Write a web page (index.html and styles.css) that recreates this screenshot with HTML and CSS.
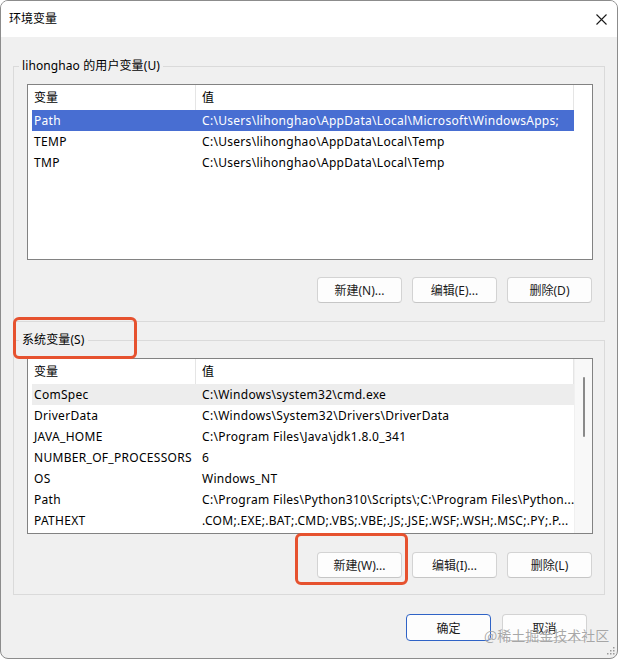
FILE: index.html
```html
<!DOCTYPE html>
<html lang="zh-CN">
<head>
<meta charset="utf-8">
<title>环境变量</title>
<link rel="stylesheet" href="styles.css">
</head>
<body>
<div class="window">
  <div class="titlebar">
    <span class="title">环境变量</span>
    <svg class="close" width="11" height="11" viewBox="0 0 11 11"><path d="M0.5 0.5L10.5 10.5M10.5 0.5L0.5 10.5" stroke="#1a1a1a" stroke-width="1.1" fill="none"/></svg>
  </div>
  <div class="content">
    <fieldset class="group group-user">
      <legend>lihonghao 的用户变量(U)</legend>
      <div class="list">
        <div class="table">
          <div class="row head"><span class="c1">变量</span><span class="c2">值</span></div>
          <div class="row selected"><span class="c1">Path</span><span class="c2">C:\Users\lihonghao\AppData\Local\Microsoft\WindowsApps;</span></div>
          <div class="row"><span class="c1">TEMP</span><span class="c2">C:\Users\lihonghao\AppData\Local\Temp</span></div>
          <div class="row"><span class="c1">TMP</span><span class="c2">C:\Users\lihonghao\AppData\Local\Temp</span></div>
        </div>
        <div class="gutter"></div>
      </div>
      <div class="buttons">
        <button class="btn">新建(N)...</button>
        <button class="btn">编辑(E)...</button>
        <button class="btn">删除(D)</button>
      </div>
    </fieldset>
    <fieldset class="group group-sys">
      <legend>系统变量(S)</legend>
      <div class="list">
        <div class="table">
          <div class="row head"><span class="c1">变量</span><span class="c2">值</span></div>
          <div class="row hover"><span class="c1">ComSpec</span><span class="c2">C:\Windows\system32\cmd.exe</span></div>
          <div class="row"><span class="c1">DriverData</span><span class="c2">C:\Windows\System32\Drivers\DriverData</span></div>
          <div class="row"><span class="c1">JAVA_HOME</span><span class="c2">C:\Program Files\Java\jdk1.8.0_341</span></div>
          <div class="row"><span class="c1">NUMBER_OF_PROCESSORS</span><span class="c2">6</span></div>
          <div class="row"><span class="c1">OS</span><span class="c2">Windows_NT</span></div>
          <div class="row"><span class="c1">Path</span><span class="c2">C:\Program Files\Python310\Scripts\;C:\Program Files\Python...</span></div>
          <div class="row"><span class="c1">PATHEXT</span><span class="c2">.COM;.EXE;.BAT;.CMD;.VBS;.VBE;.JS;.JSE;.WSF;.WSH;.MSC;.PY;.P...</span></div>
        </div>
        <div class="gutter scroll"><div class="thumb"></div></div>
      </div>
      <div class="buttons">
        <button class="btn">新建(W)...</button>
        <button class="btn">编辑(I)...</button>
        <button class="btn">删除(L)</button>
      </div>
    </fieldset>
    <div class="footer">
      <button class="btn primary">确定</button>
      <button class="btn">取消</button>
    </div>
  </div>
  <div class="mark mark-label"></div>
  <div class="mark mark-new"></div>
  <div class="watermark">@稀土掘金技术社区</div>
  <svg class="grip" width="9" height="9" viewBox="0 0 9 9">
    <rect x="7" y="1" width="1.5" height="1.5" fill="#9a9a9a"/>
    <rect x="4" y="4" width="1.5" height="1.5" fill="#9a9a9a"/>
    <rect x="7" y="4" width="1.5" height="1.5" fill="#9a9a9a"/>
    <rect x="1" y="7" width="1.5" height="1.5" fill="#9a9a9a"/>
    <rect x="4" y="7" width="1.5" height="1.5" fill="#9a9a9a"/>
    <rect x="7" y="7" width="1.5" height="1.5" fill="#9a9a9a"/>
  </svg>
</div>
</body>
</html>
```
FILE: styles.css
```css
* { box-sizing: border-box; }
html, body { margin: 0; padding: 0; background: #ffffff; }
body {
  font-family: "Noto Sans", "Noto Sans CJK SC", sans-serif;
  font-size: 12px;
  color: #000;
}
.window {
  position: relative;
  width: 618px;
  height: 659px;
  border: 1px solid #8c8c8c;
  border-radius: 8px;
  background: #f0f0f0;
  overflow: hidden;
  display: flex;
  flex-direction: column;
}
.titlebar {
  height: 36px;
  flex: none;
  background: #ffffff;
  display: flex;
  align-items: center;
  justify-content: space-between;
  padding: 0 10px 0 8px;
}
.title { font-size: 12px; line-height: 16px; }
.content { padding: 0 12px; display: flex; flex-direction: column; }
.group {
  margin: 0;
  padding: 0 0 17px 0;
  border: 1px solid #dadada;
  min-width: 0;
}
.group-user { margin-top: 21px; padding-bottom: 18px; }
.group-sys { margin-top: 10px; padding-bottom: 16px; }
.group legend {
  margin-left: 5px;
  padding: 0 3px;
  line-height: 16px;
  font-size: 12px;
  letter-spacing: 0.1px;
}
.list {
  margin: 10px 11px 0 13px;
  height: 176px;
  border: 1px solid #828282;
  background: #ffffff;
  padding-left: 4px;
  display: flex;
}
.table { flex: 1; min-width: 0; }
.gutter { width: 18px; flex: none; }
.gutter.scroll { background: #f8f8f8; border-left: 1px solid #f0f0f0; }
.thumb {
  width: 2px;
  height: 60px;
  margin: 18px 0 0 8px;
  background: #8a8a8a;
  border-radius: 1px;
}
.row {
  display: grid;
  grid-template-columns: 164px 1fr;
  height: 21px;
  align-items: center;
  line-height: 21px;
  white-space: nowrap;
  letter-spacing: 0.3px;
}
.row .c1 { padding-left: 2px; overflow: hidden; }
.row .c2 { padding-left: 6px; overflow: hidden; }
.row.head { height: 25px; line-height: 25px; letter-spacing: 0; }
.row.head .c1 { border-right: 1px solid #e5e5e5; height: 25px; }
.row.head .c2 { border-right: 1px solid #e5e5e5; height: 25px; }
.row.selected { background: #486ed2; color: #ffffff; }
.row.hover { background: #ededed; }
.buttons {
  display: flex;
  justify-content: flex-end;
  gap: 10px;
  margin: 17px 12px 0 0;
}
.group-sys .buttons { margin-top: 18px; }
.btn {
  width: 85px;
  height: 26px;
  font-family: "Noto Sans", "Noto Sans CJK SC", sans-serif;
  font-size: 12px;
  color: #1a1a1a;
  background: #fdfdfd;
  border: 1px solid #d3d3d3;
  border-bottom-color: #c6c6c6;
  border-radius: 4px;
  padding: 0;
}
.btn.primary { border: 1px solid #2f63c6; }
.footer {
  display: flex;
  justify-content: flex-end;
  gap: 11px;
  margin-top: 19px;
  padding-right: 18px;
}
.footer .btn { height: 27px; }
.mark {
  position: absolute;
  border: 3px solid #e6522f;
  border-radius: 6px;
}
.mark-label { left: 12px; top: 316px; width: 124px; height: 42px; }
.mark-new { left: 294px; top: 532px; width: 113px; height: 52px; }
.watermark {
  position: absolute;
  left: 483px;
  top: 624px;
  font-family: "Noto Sans CJK SC", sans-serif;
  font-size: 14px;
  line-height: 20px;
  color: rgba(140, 140, 140, 0.75);
  text-shadow: 0 0 1px rgba(255,255,255,0.6);
  white-space: nowrap;
}
.grip { position: absolute; right: 2px; bottom: 3px; }
```
